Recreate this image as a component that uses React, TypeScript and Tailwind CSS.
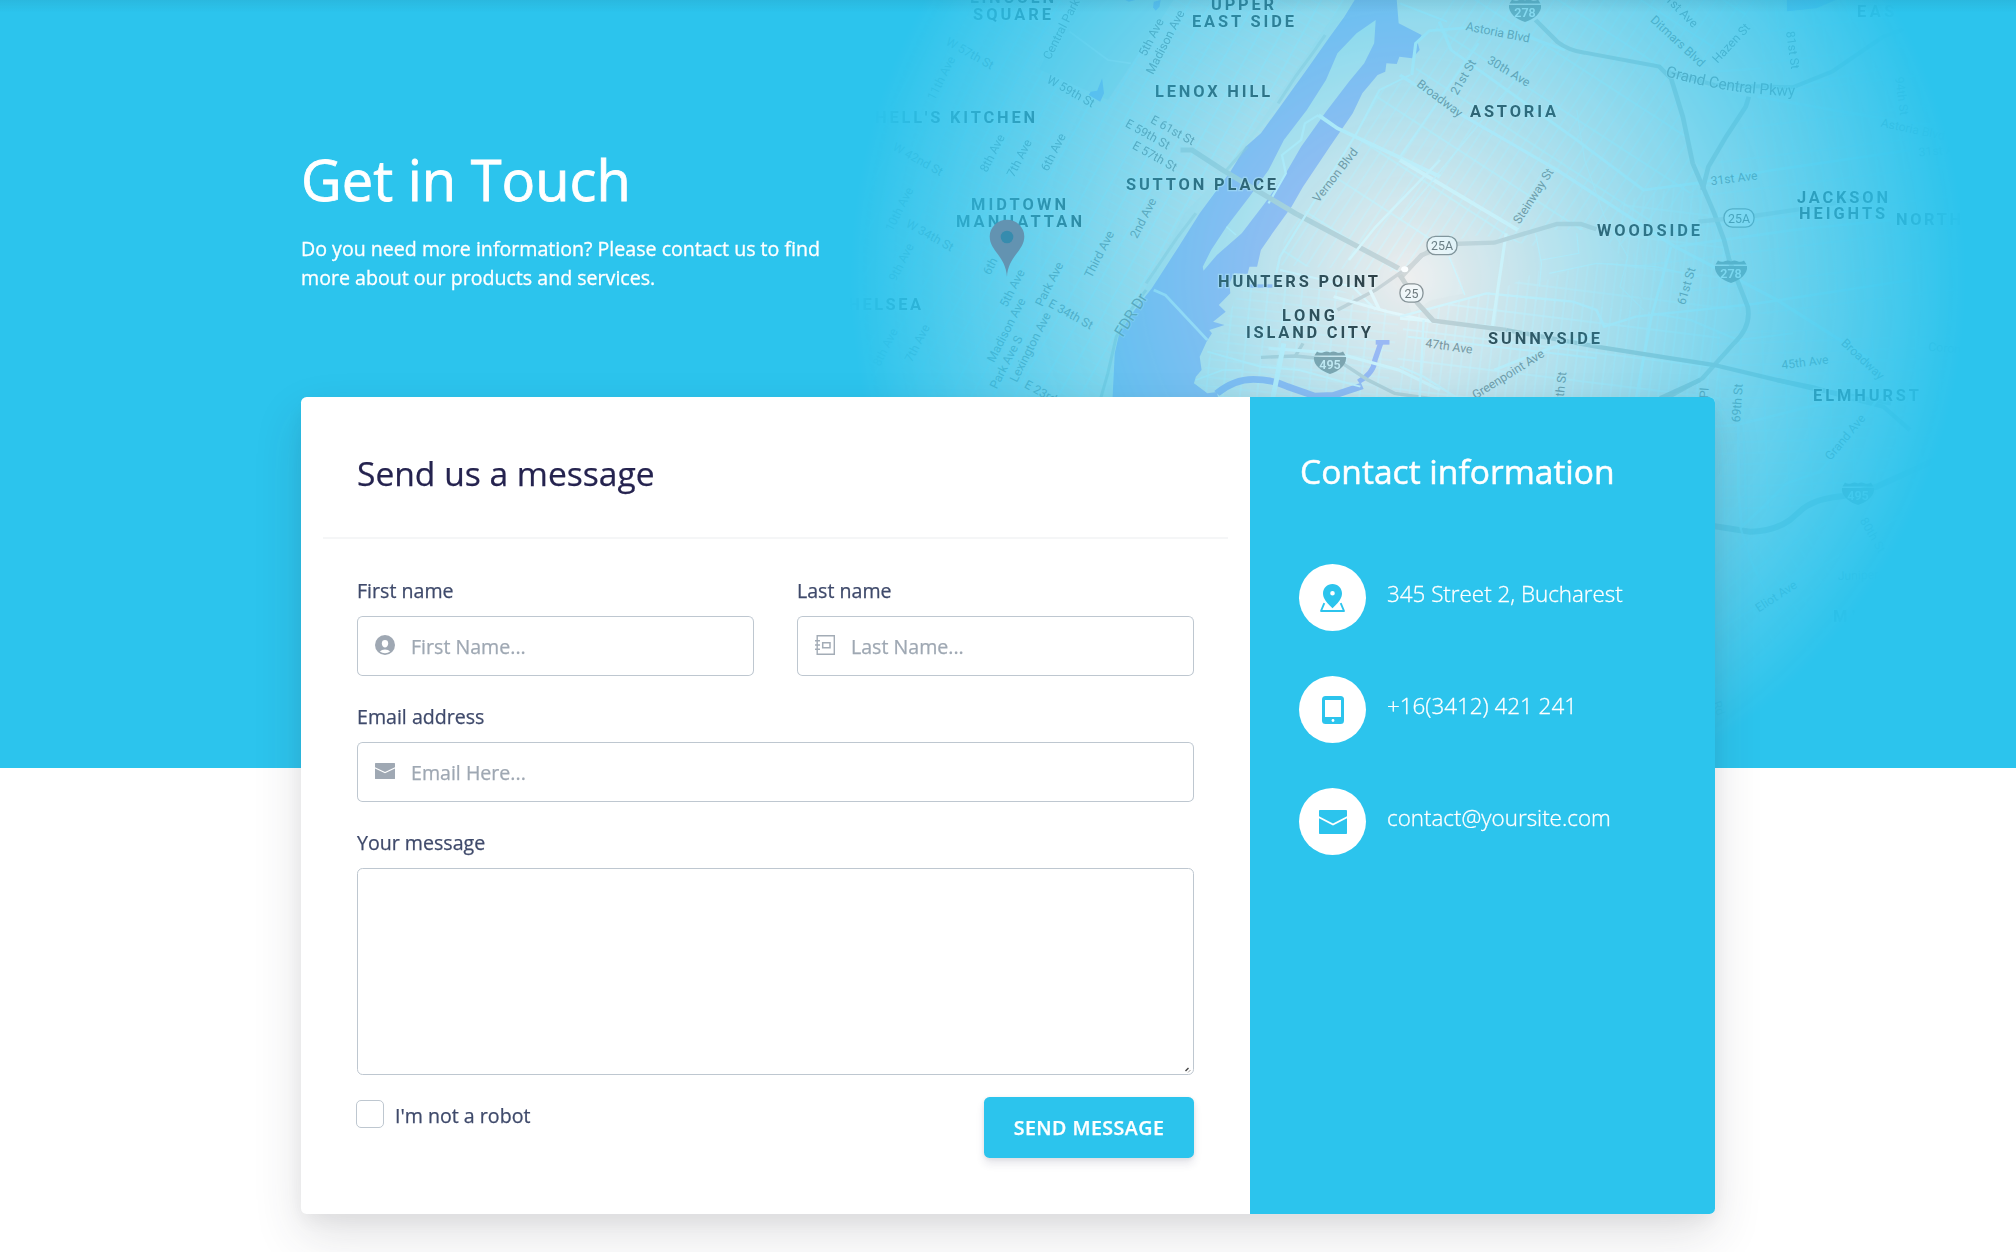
import React from "react";

type Area = { text: string; x1: number; x2: number; y: number };

const areas: Area[] = [
  { text: "LINCOLN", x1: 970, x2: 1054, y: 3 },
  { text: "SQUARE", x1: 973, x2: 1051, y: 20 },
  { text: "UPPER", x1: 1211, x2: 1274, y: 9.5 },
  { text: "EAST SIDE", x1: 1192, x2: 1294, y: 26.5 },
  { text: "LENOX HILL", x1: 1155, x2: 1270, y: 97 },
  { text: "HELL'S KITCHEN", x1: 875, x2: 1035, y: 123 },
  { text: "SUTTON PLACE", x1: 1126, x2: 1276, y: 190 },
  { text: "MIDTOWN", x1: 971, x2: 1066, y: 210 },
  { text: "MANHATTAN", x1: 956, x2: 1082, y: 227 },
  { text: "HUNTERS POINT", x1: 1218, x2: 1378, y: 287 },
  { text: "CHELSEA", x1: 835, x2: 921, y: 309.5 },
  { text: "LONG", x1: 1282, x2: 1335, y: 320.5 },
  { text: "ISLAND CITY", x1: 1246, x2: 1371, y: 337.5 },
  { text: "ASTORIA", x1: 1470, x2: 1556, y: 117 },
  { text: "WOODSIDE", x1: 1597, x2: 1700, y: 236 },
  { text: "JACKSON", x1: 1797, x2: 1888, y: 202.5 },
  { text: "HEIGHTS", x1: 1799, x2: 1885, y: 219 },
  { text: "NORTH", x1: 1896, x2: 1961, y: 225 },
  { text: "SUNNYSIDE", x1: 1488, x2: 1600, y: 343.5 },
  { text: "ELMHURST", x1: 1813, x2: 1919, y: 401 },
  { text: "EAST", x1: 1857, x2: 1908, y: 16.5 },
  { text: "MI", x1: 1833, x2: 1856, y: 622 },
];

type Street = [string, number, number, number];

const streets: Street[] = [
  ["W 57th St", 970, 53, 29],
  ["11th Ave", 941, 78, -63],
  ["Central Park", 1061, 29, -63],
  ["5th Ave", 1151, 37, -63],
  ["Madison Ave", 1165, 42, -63],
  ["W 59th St", 1071, 91, 29],
  ["E 61st St", 1173, 130, 29],
  ["E 59th St", 1148, 134, 29],
  ["E 57th St", 1155, 156, 29],
  ["8th Ave", 992, 153, -63],
  ["7th Ave", 1019, 158, -63],
  ["6th Ave", 1053, 152, -63],
  ["W 42nd St", 918, 159, 29],
  ["10th Ave", 899, 209, -63],
  ["W 34th St", 930, 235, 29],
  ["9th Ave", 901, 262, -63],
  ["6th", 990, 266, -63],
  ["2nd Ave", 1143, 218, -63],
  ["Third Ave", 1099, 254, -63],
  ["5th Ave", 1012, 288, -63],
  ["Park Ave", 1049, 284, -63],
  ["Madison Ave", 1006, 330, -63],
  ["E 34th St", 1071, 314, 29],
  ["Park Ave S", 1006, 362, -63],
  ["Lexington Ave", 1030, 347, -63],
  ["7th Ave", 917, 343, -63],
  ["8th Ave", 885, 347, -63],
  ["E 23rd St", 1047, 395, 29],
  ["Vernon Blvd", 1335, 175, -52],
  ["Astoria Blvd", 1498, 32, 11],
  ["21st St", 1463, 77, -60],
  ["30th Ave", 1509, 71, 31],
  ["Broadway", 1440, 98, 37],
  ["Ditmars Blvd", 1678, 41, 43],
  ["1st Ave", 1682, 11, 45],
  ["Hazen St", 1731, 43, -47],
  ["81st St", 1793, 50, 82],
  ["Steinway St", 1533, 196, -57],
  ["31st Ave", 1734, 178, -7],
  ["61st St", 1686, 286, -74],
  ["47th Ave", 1449, 346, 8],
  ["Greenpoint Ave", 1508, 374, -32],
  ["48th St", 1560, 391, -84],
  ["45th Ave", 1805, 362, -7],
  ["Broadway", 1863, 359, 43],
  ["94th St", 1902, 96, 82],
  ["Astoria Blvd", 1913, 129, 12],
  ["31st Ave", 1942, 150, -5],
  ["Corona", 1948, 348, 5],
  ["69th St", 1737, 403, -86],
  ["Pl", 1704, 393, -86],
  ["Grand Ave", 1845, 437, -50],
  ["80th St", 1873, 535, 60],
  ["Juniper", 1858, 575, -2],
  ["Eliot Ave", 1776, 596, -33],
  ["Rd", 1719, 708, 70],
];

const interstates = [
  { n: "278", x: 1525, y: 11 },
  { n: "278", x: 1731, y: 272 },
  { n: "495", x: 1330, y: 363 },
  { n: "495", x: 1858, y: 494 },
];

const routes = [
  { n: "25A", x: 1442, y: 245.5, w: 30 },
  { n: "25", x: 1411.5, y: 293, w: 23 },
  { n: "25A", x: 1739, y: 218, w: 30 },
];

function CityMap() {
  return (
    <svg
      className="absolute inset-0 h-full w-full"
      viewBox="0 0 2016 768"
      preserveAspectRatio="none"
      aria-hidden="true"
    >
      <defs>
        <radialGradient id="fade" gradientUnits="userSpaceOnUse" cx="1408" cy="278" r="560">
          <stop offset="0" stopColor="#fff" />
          <stop offset="1" stopColor="#fff" stopOpacity="0" />
        </radialGradient>
        <mask id="spot" maskUnits="userSpaceOnUse" x="0" y="0" width="2016" height="768">
          <rect width="2016" height="768" fill="url(#fade)" />
        </mask>
        <pattern id="gridManhattan" width="19" height="8.3" patternUnits="userSpaceOnUse" patternTransform="translate(1200 60) rotate(29)">
          <path d="M0 1H19" stroke="#d9f7fd" strokeOpacity=".6" strokeWidth="1.2" />
          <path d="M1 0V8.3" stroke="#d9f7fd" strokeOpacity=".75" strokeWidth="1.7" />
        </pattern>
        <pattern id="gridAstoria" width="10.5" height="45" patternUnits="userSpaceOnUse" patternTransform="translate(1420 70) rotate(33)">
          <path d="M0 1H10.5" stroke="#dcf8fd" strokeOpacity=".8" strokeWidth="1.8" />
          <path d="M1 0V45" stroke="#dcf8fd" strokeOpacity=".75" strokeWidth="1.3" />
        </pattern>
        <pattern id="gridJackson" width="9" height="31" patternUnits="userSpaceOnUse" patternTransform="translate(1730 160) rotate(-7)">
          <path d="M0 1H9" stroke="#d9f7fd" strokeOpacity=".6" strokeWidth="1.4" />
          <path d="M1 0V31" stroke="#d9f7fd" strokeOpacity=".5" strokeWidth="1.1" />
        </pattern>
        <pattern id="gridSunnyside" width="9.5" height="30" patternUnits="userSpaceOnUse" patternTransform="translate(1420 300) rotate(7)">
          <path d="M0 1H9.5" stroke="#e4f9fd" strokeOpacity=".9" strokeWidth="1.6" />
          <path d="M1 0V30" stroke="#e4f9fd" strokeOpacity=".75" strokeWidth="1.3" />
        </pattern>
        <pattern id="gridHunters" width="17" height="9" patternUnits="userSpaceOnUse" patternTransform="translate(1250 290) rotate(6)">
          <path d="M0 1H17" stroke="#e0f8fd" strokeOpacity=".7" strokeWidth="1.2" />
          <path d="M1 0V9" stroke="#e0f8fd" strokeOpacity=".75" strokeWidth="1.4" />
        </pattern>
        <pattern id="gridElmhurst" width="22" height="11" patternUnits="userSpaceOnUse" patternTransform="translate(1720 420) rotate(-2)">
          <path d="M0 1H22" stroke="#d9f7fd" strokeOpacity=".6" strokeWidth="1.1" />
          <path d="M1 0V11" stroke="#d9f7fd" strokeOpacity=".6" strokeWidth="1.3" />
        </pattern>
        <pattern id="gridDiagonal" width="12" height="26" patternUnits="userSpaceOnUse" patternTransform="translate(1750 540) rotate(-33)">
          <path d="M0 1H12" stroke="#d9f7fd" strokeOpacity=".6" strokeWidth="1.2" />
          <path d="M1 0V26" stroke="#d9f7fd" strokeOpacity=".5" strokeWidth="1.1" />
        </pattern>
        <path id="parkway" d="M1665 76Q1735 96 1800 96" />
      </defs>

      <g mask="url(#spot)">
        <rect width="2016" height="768" fill="#ececec" />

        {/* street grids, one patch per borough district */}
        <path d="M800 0H1345L1100 400H800Z" fill="url(#gridManhattan)" />
        <path d="M1420 60L1450 0H1760L1690 75L1715 175L1600 260L1530 245L1480 235L1440 243L1400 272L1280 265L1285 235L1340 170L1378 90L1412 78Z" fill="url(#gridAstoria)" />
        <path d="M1760 0H2016V330L1700 310L1625 262L1710 175L1760 100Z" fill="url(#gridJackson)" />
        <path d="M1405 318L1490 292L1640 312L1720 310L1720 400H1390Z" fill="url(#gridSunnyside)" />
        <path d="M1625 200L1715 178L1735 310H1650L1610 245Z" fill="url(#gridSunnyside)" opacity=".8" />
        <path d="M1540 270L1620 262L1650 315L1490 295Z" fill="url(#gridSunnyside)" opacity=".8" />
        <path d="M1245 285L1340 290L1400 315L1385 400H1190L1235 300Z" fill="url(#gridHunters)" />
        <path d="M1715 330H1990V470L1720 520Z" fill="url(#gridElmhurst)" />
        <path d="M1715 530L1830 520L1830 640L1715 700Z" fill="url(#gridDiagonal)" />

        <g transform="scale(.38265 .33333) translate(2195.2 0)">
          {/* Central Park and its ponds */}
          <path d="M612 0H872L700 300L520 208Z" fill="#dce8ea" />
          <path d="M600 95L700 180L760 190" fill="none" stroke="#fff" strokeWidth="5" opacity=".5" />
          <path d="M685 235L690 280L680 305L650 285L655 275L672 272Z" fill="#a9b9f5" />
          <path d="M820 5L838 0L835 20L825 32L818 22Z" fill="#a9b9f5" />
          <path d="M745 0H772L755 5Z" fill="#a9b9f5" />

          {/* waterfront strip along the FDR */}
          <path d="M1345 0L1225 200L1060 440L940 640L815 865L712 1060V1200H680L730 1000L830 800L900 640L1000 520L1090 380L1240 130L1318 0Z" fill="#e2ebec" opacity=".8" />

          {/* East River */}
          <path
            d="M1345 0L1318 50L1280 110L1225 200L1150 320L1100 400L1060 440L1020 515L940 640L885 740L815 865L770 930L730 1000L718 1060L712 1200V1260H1000L985 1176L960 1180L925 1150L930 1130L945 1110L940 1070L958 1025L972 1000L965 990L1005 975L975 965L1008 935L990 915L1020 880L1018 850L1030 820L1065 822L1070 800L1090 800L1100 750L1130 700L1180 620L1210 560L1280 440L1340 340L1365 280L1405 225L1425 215L1428 190L1455 192L1462 170L1495 175L1515 150L1510 130L1520 105L1460 70L1455 0Z"
            fill="#aebbf4"
          />
          <path
            d="M1400 60L1396 130L1370 190L1330 245L1270 335L1205 440L1165 520L1110 610L1050 700L985 765L950 812L948 800L970 750L1010 680L1070 590L1120 510L1160 420L1220 330L1270 240L1300 160L1350 100Z"
            fill="#dfecee"
          />
          <path d="M1120 610L1165 520L1155 465L1205 420L1215 370L1250 345" fill="none" stroke="#e2f9fd" strokeWidth="6" />
          <path d="M1010 680L1035 705" stroke="#e2f9fd" strokeWidth="4" />
          <path d="M820 870L850 885L960 1020" fill="none" stroke="#e2f9fd" strokeWidth="8" opacity=".7" />
          <path d="M1268 105L1235 160L1190 230L1145 310M1065 440L1010 510M930 640L880 715L800 850" fill="none" stroke="#bcd0d3" strokeWidth="8" opacity=".5" />
          <path d="M800 870L760 930L722 1010L700 1120L680 1200" fill="none" stroke="#bcd0d3" strokeWidth="8" opacity=".7" />

          {/* Newtown Creek */}
          <path d="M985 1180Q1030 1138 1080 1138Q1130 1138 1170 1160L1240 1188L1290 1186L1365 1158" fill="none" stroke="#a9b9f5" strokeWidth="20" />
          <path d="M1355 1145Q1395 1120 1398 1080L1413 1030" fill="none" stroke="#aab6f5" strokeWidth="14" />
          <path d="M1400 1027H1436" stroke="#aab6f5" strokeWidth="14" />
          <path d="M1070 858H1130" stroke="#a9b9f5" strokeWidth="10" />

          {/* bridge and western Queens arteries */}
          <path d="M890 450H920L1000 510L1190 640L1460 805" fill="none" stroke="#ccd5d7" strokeWidth="15" />
          <path d="M1250 345L1300 385L1440 460L1568 530" fill="none" stroke="#e2f9fd" strokeWidth="11" />
          <path d="M1490 225L1410 270L1350 400L1220 640L1150 770L1140 820" fill="none" stroke="#e2f9fd" strokeWidth="6" />
          <path d="M1150 810L1340 860L1400 930" fill="none" stroke="#e8fafd" strokeWidth="6" />
          <path d="M1568 480L1400 680L1330 780" fill="none" stroke="#e8fafd" strokeWidth="7" />
          <path d="M1300 930L1400 870L1500 790L1540 750" fill="none" stroke="#cfd4d6" strokeWidth="10" />
          <path d="M1385 870L1410 930" stroke="#effbfd" strokeWidth="9" />
          <path d="M1290 890L1430 935L1568 970" fill="none" stroke="#effbfd" strokeWidth="9" />
          <path d="M1100 1072L1190 1068L1300 1080L1380 1140L1450 1180L1568 1200" fill="none" stroke="#cbd3d5" strokeWidth="10" />
          <path d="M1190 1068L1210 1030" stroke="#cbd3d5" strokeWidth="9" />
          <path d="M1120 1045L1300 1060L1460 1110L1568 1170" fill="none" stroke="#e8fafd" strokeWidth="9" />
          <path d="M1160 1030L1130 1200" stroke="#e2f9fd" strokeWidth="13" />
          <path d="M960 1055L1100 1100L1200 1110L1360 1160" fill="none" stroke="#e2f9fd" strokeWidth="6" />
          <path d="M930 1140L1000 1110L1050 1110" fill="none" stroke="#e2f9fd" strokeWidth="5" />
        </g>

        <g transform="translate(1400 0) scale(.39286 .33333)">
          {/* open ground: cemeteries and the bay */}
          <path d="M685 235L890 290L785 520L745 480Z" fill="#e2ecee" />
          <path d="M350 690L500 690L570 780L450 800L355 850Z" fill="#eaeeef" />
          <path d="M0 840L60 770L130 760L165 880L80 900L30 940Z" fill="#efefef" />
          <path d="M985 0H1110L1060 25L985 34Z" fill="#a9b9f5" />

          {/* avenues */}
          <g fill="none" stroke="#e0f8fd">
            <path d="M0 480L300 690" strokeWidth="11" stroke="#ecfbfd" />
            <path d="M0 225L150 340L400 510L700 740L960 900L1200 1080" strokeWidth="9" />
            <path d="M100 65L130 150L450 420L620 570L750 550L950 510L1300 450" strokeWidth="8" />
            <path d="M30 225L40 130L75 92L180 82L300 100L420 150" strokeWidth="8" />
            <path d="M910 290L1200 350L1500 400" strokeWidth="8" opacity=".7" />
            <path d="M700 740L1000 690L1250 660" strokeWidth="8" opacity=".8" />
            <path d="M0 950L220 880L440 905L500 930L520 980L600 950L900 912L1300 840" strokeWidth="7" />
            <path d="M270 700L235 980L0 955" strokeWidth="8" stroke="#ecfbfd" />
            <path d="M690 740L640 950L600 1200" strokeWidth="7" />
            <path d="M125 770L165 885" strokeWidth="4" />
            <path d="M345 700L360 790L355 860M360 780L455 760L450 700" strokeWidth="3" />
            <path d="M450 330L470 480L520 650L580 770L560 860L620 930" strokeWidth="3" opacity=".8" />
            <path d="M380 820L500 790L650 800L760 830" strokeWidth="4" />
            <path d="M640 940L740 960L860 1020L1000 1000" strokeWidth="6" opacity=".8" />
            <path d="M800 215L920 205M980 265L1250 200" strokeWidth="7" opacity=".6" />
            <path d="M0 10L120 65M200 130L100 300L0 470" strokeWidth="6" />
            <path d="M370 130L0 660" strokeWidth="5" opacity=".8" />
            <path d="M20 1010L500 1075M0 1100L60 1130L140 1190M60 960L50 1200" strokeWidth="6" />
            <path d="M240 1110L370 1050L500 1000" strokeWidth="8" />
          </g>

          {/* highways */}
          <g fill="none" stroke="#bccccf" strokeWidth="12" opacity=".85">
            <path d="M345 60L400 125Q430 152 470 158L660 200L690 235L720 350L745 490L800 640L825 720L838 780L885 920Q895 980 850 1030L770 1135L670 1200" />
            <path d="M680 215L800 255L1000 262L1100 215L1230 110L1300 80" />
            <path d="M888 290L880 320L830 410L785 500L770 570" />
          </g>
          <g fill="none" stroke="#d3d7d8" strokeWidth="13">
            <path d="M0 835L55 765L130 732L240 728L290 710L400 672L460 672L500 688" />
            <path d="M760 665L900 648L1015 628L1200 590" opacity=".8" />
            <path d="M0 825L45 910L85 962L270 990" stroke="#ccd2d3" />
            <path d="M270 990L500 1040L800 1095L1060 1168L1250 1210" stroke="#bccccf" />
          </g>
          <circle cx="12" cy="808" r="9" fill="#fff" />
        </g>

        <g transform="translate(1650 380) scale(.33333)" fill="none">
          <path d="M30 55L150 0M380 0L490 22L620 60L700 80L780 150" stroke="#bccccf" strokeWidth="13" />
          <path d="M190 438L300 455Q370 455 420 420L460 385Q500 355 580 348L680 320L900 220" stroke="#bccccf" strokeWidth="18" />
          <path d="M190 140L260 135L480 80L620 50M265 130L265 330L275 440L340 380L410 310L510 275L590 180L640 120L700 30" stroke="#e0f8fd" strokeWidth="8" opacity=".7" />
          <path d="M195 755L390 640L560 530L760 400M270 440L310 560L350 640L390 700" stroke="#e0f8fd" strokeWidth="6" opacity=".6" />
        </g>

        <g fontFamily="Roboto, sans-serif" fontWeight="400" fontSize="12.2" fill="#868f93" textAnchor="middle" stroke="#e3f3f6" strokeOpacity=".45" strokeWidth="2" style={{ paintOrder: "stroke" }}>
          {streets.map(([name, x, y, r], i) => (
            <text key={i} transform={`translate(${x} ${y}) rotate(${r})`} y="4.4">
              {name}
            </text>
          ))}
          <text fontSize="15.5" transform="translate(1131 315) rotate(-58)" y="5">FDR Dr</text>
          <text fontSize="15.5" textAnchor="start">
            <textPath href="#parkway" textLength="132">Grand Central Pkwy</textPath>
          </text>
        </g>

        <g fontFamily="Roboto, sans-serif" fontWeight="700" fontSize="16.4" fill="#30383c" stroke="#f1f8fa" strokeOpacity=".5" strokeWidth="2.4" style={{ paintOrder: "stroke" }}>
          {areas.map((a) => (
            <text key={a.text} x={a.x1} y={a.y} textLength={a.x2 - a.x1}>
              {a.text}
            </text>
          ))}
        </g>

        {interstates.map((s, i) => (
          <g key={i} transform={`translate(${s.x} ${s.y})`}>
            <path d="M-13-11.5Q-10-9.5-6.5-10.8Q-3-12.5 0-10.5Q3-12.5 6.500-10.800Q10-9.500 13-11.500L15.500-7.500H-15.500Z" fill="#8f9da1" />
            <path d="M-16-6H16C17 2 9 8 0 11C-9 8-17 2-16-6Z" fill="#8f9da1" />
            <text y="5.6" textAnchor="middle" fontFamily="Roboto, sans-serif" fontWeight="600" fontSize="12.5" fill="#e6f2f4">{s.n}</text>
          </g>
        ))}
        {routes.map((s, i) => (
          <g key={i} transform={`translate(${s.x} ${s.y})`}>
            <rect x={-s.w / 2} y="-9.2" width={s.w} height="18.4" rx="8.5" fill="#f6f8f9" stroke="#8a9194" strokeWidth="1.3" />
            <text y="4.5" textAnchor="middle" fontFamily="Roboto, sans-serif" fontSize="12.4" fill="#6f777a">{s.n}</text>
          </g>
        ))}
      </g>

      {/* location pin */}
      <path d="M1007 277C1005.8 256 989.7 251 989.7 236.5A17.3 16.7 0 0 1 1024.3 236.5C1024.3 251 1008.2 256 1007 277Z" fill="#6393b1" />
      <circle cx="1007" cy="237" r="6.3" fill="#368cae" />
    </svg>
  );
}

function MailIcon({ className }: { className: string }) {
  return (
    <svg viewBox="0 0 28 24" preserveAspectRatio="none" className={className} fill="currentColor" aria-hidden="true">
      <path d="M.8 0H27.2Q28 0 28 .8V6.2L14 13.4L0 6.2V.8Q0 0 .8 0Z" />
      <path d="M0 8.2L14 15.4L28 8.2V23.2Q28 24 27.2 24H.8Q0 24 0 23.2Z" />
    </svg>
  );
}

function UserIcon() {
  return (
    <svg viewBox="0 0 20 20" className="size-5" aria-hidden="true">
      <circle cx="10" cy="10" r="10" fill="#9fa8b3" />
      <path d="M10 5A3.2 3.4 0 0 1 13.2 8.4C13.2 10.6 11.8 12.4 10 12.4S6.8 10.6 6.8 8.4A3.2 3.4 0 0 1 10 5Z" fill="#fff" />
      <path d="M4.9 16.5Q6.5 14.4 10 14.4T15.1 16.5Q13 18.2 10 18.2T4.9 16.5Z" fill="#fff" />
    </svg>
  );
}

function NotebookIcon() {
  return (
    <svg viewBox="0 0 20 20" className="size-5" fill="none" stroke="#a3acb6" aria-hidden="true">
      <path d="M2.2 .7H19.3V19.3H2.2Z" strokeWidth="1.4" />
      <path d="M7.7 7.7H15V12.8H7.7Z" strokeWidth="1.5" />
      <path d="M0 5.8H5M0 10H5M0 14.2H5" strokeWidth="1.5" />
    </svg>
  );
}

function PlaceIcon() {
  return (
    <svg viewBox="0 0 25 28" className="h-7 w-[25px]" fill="#2cc4ed" aria-hidden="true">
      <path fillRule="evenodd" d="M12.5 0C17.8 0 22 4.1 22 9.3C22 14.7 18.2 19 12.5 24.2C6.8 19 3 14.7 3 9.3C3 4.1 7.2 0 12.5 0ZM12.5 6.9A2.3 2.3 0 1 0 12.5 11.5A2.3 2.3 0 1 0 12.5 6.9Z" />
      <path d="M4.3 19.2L1 27H24L20.7 19.2" fill="none" stroke="#2cc4ed" strokeWidth="1.9" strokeLinejoin="round" />
    </svg>
  );
}

function TabletIcon() {
  return (
    <svg viewBox="0 0 22 28" className="h-7 w-[22px]" fill="#2cc4ed" aria-hidden="true">
      <rect width="22" height="28" rx="3.5" />
      <rect x="3" y="4" width="16" height="17" fill="#fff" />
      <circle cx="11" cy="24.5" r="1.4" fill="#fff" />
    </svg>
  );
}

function Field({ label, placeholder, icon }: { label: string; placeholder: string; icon: React.ReactNode }) {
  return (
    <label className="flex flex-1 flex-col gap-[11px]">
      <span className="h-7 text-[19.6px] leading-7">{label}</span>
      <span className="flex h-[60px] gap-px">
        <span className="flex w-[54px] items-center rounded-l-[5.6px] border border-r-0 border-[#bec7d0] pb-[2px] pl-[17px] text-[#9fa8b3]">
          {icon}
        </span>
        <input
          placeholder={placeholder}
          className="-ml-px min-w-0 flex-1 rounded-r-[5.6px] border border-l-0 border-[#bec7d0] bg-white pt-px text-[19.6px] outline-none placeholder:text-[#9fa8b3]"
        />
      </span>
    </label>
  );
}

function ContactRow({ icon, children }: { icon: React.ReactNode; children: React.ReactNode }) {
  return (
    <li className="flex gap-[21px]">
      <span className="flex size-[67px] items-center justify-center rounded-full bg-white text-[#2cc4ed]">{icon}</span>
      <span className="pt-3 text-[22.4px] leading-9 font-light [-webkit-text-stroke:0.3px]">{children}</span>
    </li>
  );
}

export default function App() {
  return (
    <div className="h-[1252px] w-full overflow-hidden bg-white font-['Open_Sans',sans-serif] text-[#3f4a6b]">
      <header className="relative h-[768px] bg-[#2cc4ed]">
        <CityMap />
        <div className="absolute inset-x-0 top-0 h-3 bg-gradient-to-b from-[#1b3a4b]/8 to-transparent" />
        <div className="relative mx-auto w-[1414px] pt-[147px] text-white">
          <h1 className="text-[56px] leading-[64px] [-webkit-text-stroke:0.8px]">Get in Touch</h1>
          <p className="mt-[23px] w-[560px] text-[19.6px] leading-[29px] [-webkit-text-stroke:0.3px]">
            Do you need more information? Please contact us to find more about our products and services.
          </p>
        </div>
      </header>

      <main className="relative mx-auto -mt-[371px] flex h-[817px] w-[1414px] rounded-[5.6px] bg-white shadow-[0_21px_49px_rgba(50,50,63,0.14),0_7px_21px_rgba(0,0,0,0.06)]">
        <form className="flex w-[949px] flex-col [-webkit-text-stroke:0.25px]" onSubmit={(e) => e.preventDefault()}>
          <h2 className="pt-[52px] pl-14 text-[33.6px] leading-[48px] text-[#25234f]">Send us a message</h2>
          <hr className="mx-[22px] mt-[40px] border-t-2 border-[#f5f6f7]" />
          <div className="flex flex-col gap-[27px] px-14 pt-[38px]">
            <div className="flex gap-[43px]">
              <Field label="First name" placeholder="First Name..." icon={<UserIcon />} />
              <Field label="Last name" placeholder="Last Name..." icon={<NotebookIcon />} />
            </div>
            <Field label="Email address" placeholder="Email Here..." icon={<MailIcon className="h-4 w-5" />} />
            <label className="relative flex flex-col gap-[11px]">
              <span className="h-7 text-[19.6px] leading-7">Your message</span>
              <textarea className="h-[207px] resize-none rounded-[5.6px] border border-[#bec7d0] outline-none" />
              <svg viewBox="0 0 6 6" className="absolute right-[3px] bottom-[2px] size-1.5" stroke="#444" aria-hidden="true">
                <path d="M.5 4L3.5 1" strokeWidth="1.4" />
                <path d="M3 5.500L5.500 3" stroke="#999" />
              </svg>
            </label>
          </div>
          <div className="flex items-start justify-between pt-[22px] pr-14 pl-[55px]">
            <label className="flex items-center gap-[11px] pt-[3px] text-[19.6px]">
              <input type="checkbox" className="size-[28px] appearance-none rounded-[5px] border border-[#bec7d0] bg-white" />
              <span className="h-7 pt-[2px] leading-7">I'm not a robot</span>
            </label>
            <button className="h-[61px] w-[210px] rounded-[5.6px] bg-[#2cc4ed] text-[19.6px] font-semibold tracking-[0.45px] text-white shadow-[0_6px_8px_rgba(50,50,93,0.11),0_1px_4px_rgba(0,0,0,0.08)]">
              SEND MESSAGE
            </button>
          </div>
        </form>

        <aside className="flex-1 rounded-r-[5.6px] bg-[#2cc4ed] pt-[51px] pl-[49px] text-white">
          <h2 className="pl-px text-[33.6px] leading-[46px] [-webkit-text-stroke:0.5px]">Contact information</h2>
          <ul className="mt-[70px] flex flex-col gap-[45px]">
            <ContactRow icon={<PlaceIcon />}>345 Street 2, Bucharest</ContactRow>
            <ContactRow icon={<TabletIcon />}>+16(3412) 421 241</ContactRow>
            <ContactRow icon={<MailIcon className="h-6 w-7" />}>contact@yoursite.com</ContactRow>
          </ul>
        </aside>
      </main>
    </div>
  );
}
